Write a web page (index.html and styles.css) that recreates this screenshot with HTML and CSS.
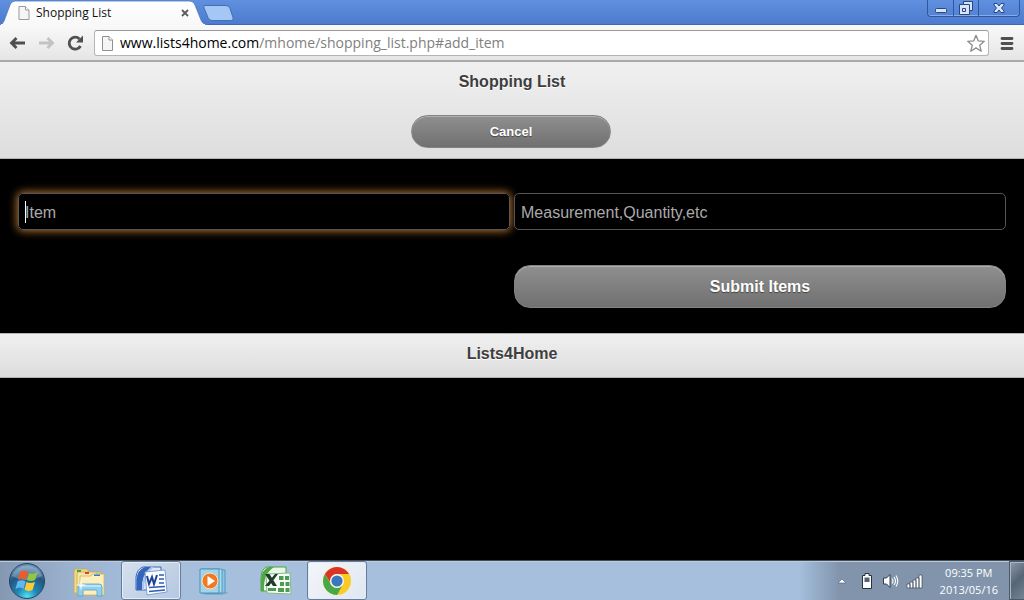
FILE: index.html
```html
<!DOCTYPE html>
<html lang="en">
<head>
<meta charset="utf-8">
<title>Shopping List</title>
<link rel="stylesheet" href="styles.css">
</head>
<body>
<div class="tabstrip">
  <div class="tab">
    <svg class="tab-shape" viewBox="0 0 208 25" preserveAspectRatio="none" aria-hidden="true">
      <defs><linearGradient id="tabFill" x1="0" y1="0" x2="0" y2="1"><stop offset="0" stop-color="#fff"/><stop offset="1" stop-color="#f8f8f8"/></linearGradient></defs>
      <path d="M0 25 Q3 24 4 21 L10 5 Q11.500 1 15 1 H190 Q193.500 1 195 5 L201 20 Q203 25 208 25Z" fill="url(#tabFill)" stroke="#4a77bd" stroke-width=".8"/>
      <path d="M1 24 H205 V25 H1Z" fill="#f8f8f8"/>
    </svg>
    <svg class="tab-page" viewBox="0 0 12 14" aria-hidden="true"><path d="M1 .5H7.500L11 4V13.500H1Z" fill="#f5f5f5" stroke="#999"/><path d="M7.500 .5V4H11" fill="#fff" stroke="#999"/></svg>
    <span class="tab-title">Shopping List</span>
    <button class="tab-close" aria-label="Close tab"><svg viewBox="0 0 8 8"><path d="M1 1L7 7M7 1L1 7" stroke="#5c5c5c" stroke-width="1.800"/></svg></button>
  </div>
  <button class="new-tab" aria-label="New tab"><svg viewBox="0 0 34 17"><path d="M5 .5H26Q29 .5 30 3.500L33 12.500Q34 15.500 31 15.500H12Q9 15.500 8 12.500L4 3Q3 .5 5 .5Z" fill="#a5c7f6" stroke="#426eb5"/></svg></button>
  <div class="window-controls">
    <button class="win" aria-label="Minimize"><svg width="14" height="14" viewBox="0 0 14 14"><rect x="1.500" y="7.500" width="11" height="4" rx="1" fill="#d7e4fa" stroke="#28477f"/></svg></button>
    <button class="win" aria-label="Restore"><svg width="14" height="14" viewBox="0 0 14 14"><path d="M4.500 .5H13.500V9.500H10.500V13.500H.5V3.500H4.500Z" fill="#d7e4fa" stroke="#28477f"/><path d="M4.500 3.500H10.500V9.500M3.500 7.500H6.500V10.500H3.500Z" fill="none" stroke="#28477f"/></svg></button>
    <button class="win win-close" aria-label="Close"><svg width="14" height="14" viewBox="0 0 14 14"><path d="M2 2.500H5L7 5 9 2.500H12V4L9.500 7 12 10V11.500H9L7 9 5 11.500H2V10L4.500 7 2 4Z" fill="#d7e4fa" stroke="#28477f"/></svg></button>
  </div>
</div>
<div class="toolbar">
  <button class="nav" aria-label="Back"><svg viewBox="0 0 18 18"><path d="M8.500 4L3.500 9 8.500 14M3.500 9H17" fill="none" stroke="#4f4f4f" stroke-width="2.800"/></svg></button>
  <button class="nav" aria-label="Forward"><svg viewBox="0 0 18 18"><path d="M10.500 4L15.500 9 10.500 14M2 9H15.500" fill="none" stroke="#c3c3c3" stroke-width="2.800"/></svg></button>
  <button class="nav" aria-label="Reload"><svg viewBox="0 0 18 18"><path d="M13.500 5A6 6 0 1 0 14.500 12" fill="none" stroke="#4f4f4f" stroke-width="2.800"/><path d="M17 1.500V8.500H10Z" fill="#4f4f4f"/></svg></button>
  <div class="omnibox">
    <svg class="omni-page" viewBox="0 0 13 16" aria-hidden="true"><path d="M1.500 1.500H8L11.500 5V15.500H1.500Z" fill="#f5f5f5" stroke="#909090"/><path d="M8 1.500V5H11.500" fill="#fff" stroke="#909090"/></svg>
    <div class="url" role="textbox" aria-label="Address" contenteditable="true" spellcheck="false">www.lists4home.com<span class="path">/mhome/shopping_list.php#add_item</span></div>
    <button class="star" aria-label="Bookmark"><svg viewBox="0 0 20 20"><path d="M10 2.300L12.300 7.900 18.300 8.300 13.700 12.200 15.200 18.200 10 14.900 4.800 18.200 6.300 12.200 1.700 8.300 7.700 7.900Z" fill="#fff" stroke="#8b8b8b" stroke-width="1.300" stroke-linejoin="round"/></svg></button>
  </div>
  <button class="menu" aria-label="Menu"><svg viewBox="0 0 14 14"><path d="M2 2.500H12M2 7.500H12M2 12.500H12" stroke="#505050" stroke-width="2.800" stroke-linecap="round"/></svg></button>
</div>
<main class="page">
  <header class="bar header">
    <h1 class="title">Shopping List</h1>
    <button class="pill cancel">Cancel</button>
  </header>
  <form class="form">
    <div class="field focused"><input class="text" type="text" placeholder="Item" aria-label="Item"></div>
    <div class="field"><input class="text" type="text" placeholder="Measurement,Quantity,etc" aria-label="Measurement, quantity"></div>
    <button class="pill submit" type="button">Submit Items</button>
  </form>
  <footer class="bar footer"><h2 class="title">Lists4Home</h2></footer>
</main>
<nav class="taskbar">
  <button class="start" aria-label="Start"><svg viewBox="0 0 38 38">
    <defs><radialGradient id="orb" cx=".5" cy=".95" r=".85"><stop offset="0" stop-color="#55e0f5"/><stop offset=".35" stop-color="#1f86b4"/><stop offset=".75" stop-color="#255580"/><stop offset="1" stop-color="#5f8db3"/></radialGradient></defs>
    <circle cx="19" cy="19" r="17.500" fill="url(#orb)" stroke="#29435f"/><path d="M4 14A16 16 0 0 1 34 14Q19 22 4 14Z" fill="#fff" opacity=".25"/>
    <path d="M12 10Q16 7 20 10L18 18Q14 15 10 18Z" fill="#ee5b29"/><path d="M21 11Q25 13 30 10L27 18Q23 20 19 18Z" fill="#90c83f"/><path d="M9.500 19.500Q13 17 17.500 19.500L15.500 27Q12 24 7.500 27Z" fill="#64b7ec"/><path d="M18.500 20Q22 22 27 20L24.500 28Q20 30 16.500 27.500Z" fill="#fecb36"/></svg></button>
  <button class="task" aria-label="File Explorer"><svg viewBox="0 0 34 34">
    <path d="M2 8L3 5H15L17 8H29V29H2Z" fill="#efd98c" stroke="#c3a75a" stroke-width=".8"/><path d="M5 6H9V8H5Z" fill="#25a333"/>
    <path d="M5 29V10L6 8H24L25 10H31V31H5Z" fill="#f7e6a6" stroke="#c3a75a" stroke-width=".8"/><path d="M13 8H17V10H13Z" fill="#d84730"/><path d="M20 10H32V31H8V12H19Z" fill="#fbefbd" stroke="#cdb570" stroke-width=".8"/><path d="M22 10.500H28V12H22Z" fill="#297fca"/>
    <path d="M6 32V23Q6 20 9 20H27Q30 20 30 23V32H25V27Q25 26 24 26H12Q11 26 11 27V32Z" fill="#8ed0ee" stroke="#5b9fc4" stroke-width=".8"/><path d="M7 22H29" stroke="#c9ecfa" stroke-width="1.500"/><path d="M9 15L10 20 15 21 10 22 9 27 8 22 3 21 8 20Z" fill="#fff" opacity=".85"/></svg></button>
  <button class="task open" aria-label="Word"><svg viewBox="0 0 34 34">
    <path d="M9 3H27V26H2V13Q3 5 9 3Z" fill="#dfe9f8" stroke="#3b66b4"/><path d="M11 3Q3 6 2.500 16V26H8Q7 11 17 3Z" fill="#3265bb"/><path d="M8 26Q7 12 17 3H20Q10 10 10 26Z" fill="#a9c3ec"/>
    <path d="M11 8L31 6 33 28 13 31Z" fill="#fafcff" stroke="#7ea0d5"/><path d="M13 12L15 20 18 13 20 20 23 11" fill="none" stroke="#1f4496" stroke-width="2"/><path d="M25 11H30M25 15H30M25 19H30M15 23.500L31 22.500M15 27.500L31 26" stroke="#315daf" stroke-width="1.600"/></svg></button>
  <button class="task" aria-label="Media Player"><svg viewBox="0 0 34 34">
    <path d="M25 26L33 29 25 31H7Z" fill="#6c8db0" opacity=".4"/><path d="M8 6H29V29H8Z" fill="#8dc6df" stroke="#4b9cc3"/><path d="M6 5H26V29H6Z" fill="#b3dbea" stroke="#4b9cc3"/><path d="M4 5H23V29H4Z" fill="#a5d3e6" stroke="#4993b7"/><circle cx="14" cy="17" r="8" fill="#f37920" stroke="#e9e4df"/><path d="M11.500 12L19 17 11.500 22Z" fill="#fff"/></svg></button>
  <button class="task" aria-label="Excel"><svg viewBox="0 0 34 34">
    <path d="M9 3H28V27H3V14Q3 5 9 3Z" fill="#e9f6e4" stroke="#4ba345"/><path d="M11 3Q3 6 3 16V27H6Q5 10 16 3Z" fill="#50a747"/><path d="M8 10L32 9 33 30 9 29Z" fill="#f8fcf6" stroke="#87b987"/><path d="M21 12H25.500V16H21ZM27 12H31V16H27ZM22 18H26V22H22ZM27.500 18H31.500V22H27.500ZM10 24H18V27H10ZM20 24H26V28H20ZM27.500 24H31.500V28H27.500Z" fill="#4b9c52"/><path d="M7 10H11.500L19 22H15ZM17 10H20L11 22H7Z" fill="#203d2a"/></svg></button>
  <button class="task open active" aria-label="Chrome"><svg viewBox="0 0 34 34">
    <circle cx="17" cy="17" r="14" fill="#f9cb24"/><path d="M4.900 10A14 14 0 0 1 29.100 10H17A7 7 0 0 0 11 13.500L10 18Z" fill="#dc3327"/><path d="M4.900 10A14 14 0 0 0 17 31L23 20.500A7 7 0 0 1 11 20.500Z" fill="#46a846"/><circle cx="17" cy="17" r="7" fill="#f7f7f7"/><circle cx="17" cy="17" r="5.600" fill="#3978bd"/></svg></button>
  <div class="tray">
    <svg class="tray-up" viewBox="0 0 10 6"><path d="M5 1L9 5H1Z" fill="#fff" stroke="#4a5b72" stroke-width=".6"/></svg>
    <svg class="tray-icon battery" viewBox="0 0 12 18"><path d="M4 1.500H8V3.500H10.500V16.500H1.500V3.500H4Z" fill="#fff" stroke="#27313f"/><path d="M3.500 5.500H8.500V10H3.500Z" fill="#566273"/></svg>
    <svg class="tray-icon sound" viewBox="0 0 18 18"><path d="M1.500 6H4.500L8 2.500V15.500L4.500 12H1.500Z" fill="#fff" stroke="#313e50"/><path d="M10 6.500Q12 9 10 11.500M12 5Q15 9 12 13M14 3.500Q17.500 9 14 14.500" fill="none" stroke="#fff" stroke-width="1.100"/></svg>
    <svg class="tray-icon signal" viewBox="0 0 18 16"><path d="M1 11H4V15H1ZM4 9H7V15H4ZM7 7H10V15H7ZM10 5H13V15H10ZM13 2H16V15H13Z" fill="#fff" stroke="#3a475a" stroke-width=".7"/></svg>
    <div class="clock"><time>09:35 PM</time><time>2013/05/16</time></div>
    <button class="desktop" aria-label="Show desktop"></button>
  </div>
</nav>
</body>
</html>
```
FILE: styles.css
```css
* { box-sizing: border-box; }
body { margin: 0; min-height: 100vh; display: flex; flex-direction: column; background: #000; font-family: "Open Sans", "Noto Sans", sans-serif; }
button { margin: 0; padding: 0; border: 0; background: none; font: inherit; }
svg { display: block; flex: none; }

.tabstrip { height: 25px; display: flex; align-items: flex-start; background: linear-gradient(#6090df, #4d7ace); border-bottom: 1px solid #3d68b3; }
.tab { position: relative; isolation: isolate; width: 208px; height: 25px; flex: none; display: flex; align-items: center; padding: 0 18px 0 18px; gap: 6px; }
.tab-shape { position: absolute; inset: 0; width: 100%; height: 100%; z-index: -1; }
.tab-page { width: 12px; height: 14px; }
.tab-title { flex: 1; font-size: 12px; line-height: 16px; color: #111; }
.tab-close { padding: 1px; }
.tab-close svg { width: 8px; height: 8px; }
.new-tab { margin-left: -8px; padding-top: 5px; }
.new-tab svg { width: 34px; height: 17px; }
.window-controls { display: flex; margin-left: auto; margin-right: 4px; border: 1px solid #30579d; border-top: 0; border-radius: 0 0 4px 4px; height: 17px; box-shadow: inset 0 -1px #88ace8; }
.win { width: 25px; display: grid; place-items: center; }
.win + .win { border-left: 1px solid #30579d; }
.win-close { width: 41px; }

.toolbar { height: 37px; display: flex; align-items: center; padding: 0 10px 0 8px; background: linear-gradient(#f9f9f9, #e5e5e5); border-bottom: 2px solid #aaa; }
.nav { width: 18px; margin-right: 11px; }
.nav svg { width: 18px; height: 18px; }
.nav:nth-child(3) { margin-right: 10px; }
.omnibox { flex: 1; height: 26px; display: flex; align-items: center; background: #fff; border: 1px solid #b5b5b5; border-top-color: #999; border-radius: 3px; padding: 0 2px 0 6px; }
.omni-page { width: 13px; height: 16px; }
.url { flex: 1; padding-left: 6px; font-size: 14px; line-height: 20px; color: #000; white-space: nowrap; outline: 0; }
.path { color: #808080; }
.star svg { width: 20px; height: 20px; }
.menu { margin-left: 11px; }
.menu svg { width: 14px; height: 14px; }

.page { flex: 1; font-family: "Liberation Sans", Arial, sans-serif; }
.bar { background: linear-gradient(#f0f0f0, #ddd); border: 1px solid #b3b3b3; border-width: 1px 0; text-align: center; color: #3e3e3e; text-shadow: 0 1px 1px #fff; }
.title { margin: 0; font-size: 16px; line-height: 20px; font-weight: bold; }
.header { border-top: 0; padding: 10px 0; }
.header .title { margin-bottom: 23px; }
.pill { color: #fff; font-weight: bold; text-shadow: 0 1px 1px #444; background: linear-gradient(#8f8f8f, #707070); border: 1px solid #828282; box-shadow: inset 0 1px #b0b0b0; }
.cancel { width: 200px; height: 33px; margin-right: 2px; border-radius: 17px; font-size: 13px; vertical-align: top; }
.form { display: grid; grid-template-columns: 1fr 1fr; gap: 35px 4px; padding: 34px 18px 25px; }
.field { position: relative; border-radius: 5px; }
.focused { box-shadow: 0 0 8px 1px #b87430; }
.focused::after { content: ""; position: absolute; left: 7px; top: 8px; width: 1px; height: 22px; background: #fff; }
.text { display: block; width: 100%; height: 37px; padding: 2px 6px 0; border: 1px solid #555; border-radius: 5px; background: #000; color: #fff; font: 16px/20px "Liberation Sans", Arial, sans-serif; outline: 0; }
.text::placeholder { color: #aaa; opacity: 1; }
.submit { grid-column: 2; height: 43px; border-radius: 16px; font-size: 16px; }
.footer { padding: 10px 0 13px; }

.taskbar { height: 40px; display: flex; align-items: stretch; border-top: 1px solid #454c55; background: linear-gradient(90deg, #8498b2 0, #9bb2cf 70px, #a5bfdd 150px, #a5bfdd 78%, #8194ac 82%, #8194ac); box-shadow: inset 0 1px #b8cbe0; }
.start { width: 54px; display: grid; place-items: center; }
.start svg { width: 38px; height: 38px; }
.task { width: 60px; margin-right: 2px; display: grid; place-items: center; border: 1px solid transparent; border-radius: 3px; }
.start + .task { margin-left: 5px; }
.task svg { width: 34px; height: 34px; }
.open { border-color: #667c98; background: linear-gradient(135deg, #d5e0ee, #b4c8e0); box-shadow: inset 0 0 0 1px #e4edf7; }
.active { background: linear-gradient(135deg, #f4f6fa, #dfe7f1); }
.tray { margin-left: auto; display: flex; align-items: center; }
.tray-up { width: 10px; height: 6px; margin-right: 14px; }
.battery { width: 12px; height: 18px; margin-right: 9px; }
.sound { width: 18px; height: 18px; margin-right: 6px; }
.signal { width: 18px; height: 16px; margin-right: 16px; }
.clock { display: flex; flex-direction: column; align-items: center; color: #fff; font-size: 11px; line-height: 17px; }
.desktop { align-self: stretch; width: 15px; margin-left: 11px; border: 1px solid #4c5969; border-right: 0; background: linear-gradient(135deg, #8d9aab, #566474 50%, #758497); box-shadow: inset 1px 1px #a7b6c8; }
```
